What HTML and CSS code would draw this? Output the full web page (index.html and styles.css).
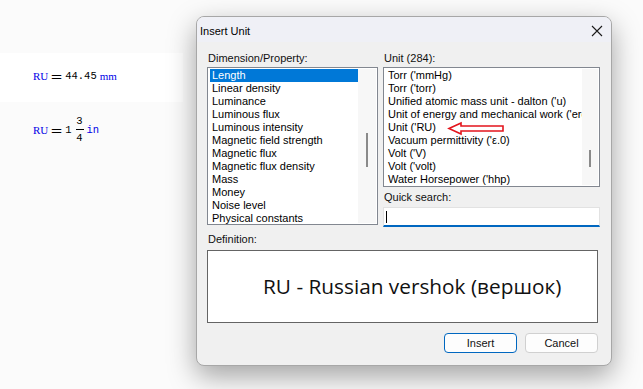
FILE: index.html
```html
<!DOCTYPE html>
<html lang="en">
<head>
<meta charset="UTF-8" />
<title>Insert Unit</title>
<link rel="stylesheet" href="styles.css">
</head>
<body>
  <div class="desk">
    <div class="sheet">
      <div class="region">
        <div class="expr">
          <span class="var">RU</span><span class="eq">=</span><span class="num">44.45</span><span class="unit">mm</span>
        </div>
      </div>
      <div class="expr expr-frac">
        <span class="var">RU</span><span class="eq">=</span><span class="num">1</span>
        <span class="frac"><span>3</span><span class="bar"></span><span>4</span></span>
        <span class="num unit-mono">in</span>
      </div>
    </div>

    <div class="dialog">
      <div class="titlebar">
        <span class="title">Insert Unit</span>
        <svg class="close" width="12" height="12" viewBox="0 0 12 12">
          <path d="M1 1 L11 11 M11 1 L1 11" stroke="#1b1b1b" stroke-width="1.1" fill="none"/>
        </svg>
      </div>

      <div class="body">
        <div class="columns">
          <div class="col">
            <div class="label">Dimension/Property:</div>
            <div class="list list-dim">
              <div class="items">
                <div class="item selected">Length</div>
                <div class="item">Linear density</div>
                <div class="item">Luminance</div>
                <div class="item">Luminous flux</div>
                <div class="item">Luminous intensity</div>
                <div class="item">Magnetic field strength</div>
                <div class="item">Magnetic flux</div>
                <div class="item">Magnetic flux density</div>
                <div class="item">Mass</div>
                <div class="item">Money</div>
                <div class="item">Noise level</div>
                <div class="item">Physical constants</div>
              </div>
              <div class="track"><div class="thumb"></div></div>
            </div>
          </div>

          <div class="col">
            <div class="label">Unit (284):</div>
            <div class="list list-unit">
              <div class="items">
                <div class="item">Torr ('mmHg)</div>
                <div class="item">Torr ('torr)</div>
                <div class="item">Unified atomic mass unit - dalton ('u)</div>
                <div class="item">Unit of energy and mechanical work ('erg)</div>
                <div class="item">Unit ('RU)</div>
                <div class="item">Vacuum permittivity ('ε.0)</div>
                <div class="item">Volt ('V)</div>
                <div class="item">Volt ('volt)</div>
                <div class="item">Water Horsepower ('hhp)</div>
              </div>
              <div class="track"><div class="thumb"></div></div>
              <svg class="arrow" width="60" height="16" viewBox="0 0 60 16">
                <path d="M2 7.5 L14 2 L14 5 L56 5 L56 10 L14 10 L14 13 Z" fill="#fff" stroke="#e3141c" stroke-width="1.6" stroke-linejoin="miter"/>
              </svg>
            </div>
            <div class="label label-search">Quick search:</div>
            <div class="search"><span class="caret"></span></div>
          </div>
        </div>

        <div class="label label-def">Definition:</div>
        <div class="definition">RU - Russian vershok (вершок)</div>

        <div class="buttons">
          <button class="btn btn-default">Insert</button>
          <button class="btn">Cancel</button>
        </div>
      </div>
    </div>
  </div>
</body>
</html>
```

FILE: styles.css
```css
html, body {
  margin: 0;
  width: 643px;
  height: 389px;
  overflow: hidden;
  background: #fbfbfb;
}
.desk {
  display: flex;
  align-items: flex-start;
}

/* worksheet */
.sheet {
  width: 196px;
  padding-top: 53px;
  flex-shrink: 0;
}
.region {
  width: 183px;
  height: 49px;
  background: #fff;
  padding-top: 16px;
  box-sizing: border-box;
}
.expr {
  display: flex;
  align-items: center;
  padding-left: 33px;
  height: 14px;
  font-size: 10.5px;
  color: #000;
}
.var, .unit {
  font-family: "Liberation Serif", serif;
  color: #0000e6;
  font-size: 11px;
}
.eq {
  font-family: "DejaVu Sans", sans-serif;
  font-size: 13px;
  margin: 0 3px 0 3px;
  transform: scaleX(1.15);
}
.num {
  font-family: "Liberation Mono", monospace;
  font-size: 10.5px;
  margin-right: 3px;
}
.unit-mono {
  color: #0000e6;
  margin-left: 3px;
}
.expr-frac {
  margin-top: 13px;
  height: 30px;
}
.frac {
  display: inline-flex;
  flex-direction: column;
  align-items: center;
  font-family: "Liberation Mono", monospace;
  font-size: 10.5px;
  line-height: 11px;
  margin-left: 1px;
}
.frac .bar {
  width: 8px;
  height: 1px;
  background: #000;
  margin: 2px 0 3px;
}

/* dialog */
.dialog {
  margin-top: 16px;
  width: 416px;
  height: 350px;
  box-sizing: border-box;
  border: 1px solid #a7a7a7;
  border-radius: 8px;
  background: #f0f0f0;
  box-shadow: 0 10px 28px rgba(0,0,0,0.36);
  overflow: hidden;
  font-family: "Liberation Sans", Arial, sans-serif;
  font-size: 11px;
  color: #000;
}
.titlebar {
  height: 25px;
  background: #eff0f6;
  display: flex;
  align-items: center;
  justify-content: space-between;
  padding: 0 8px 0 3px;
}
.title {
  font-size: 11px;
  padding-top: 2px;
}
.close {
  margin-top: 2px;
}
.body {
  padding: 9px 11px 0 10px;
}
.columns {
  display: grid;
  grid-template-columns: 171px 217px;
  gap: 5px;
  align-items: start;
}
.label {
  line-height: 14px;
  height: 14px;
  padding-left: 1px;
  margin-bottom: 2px;
  color: #111;
}
.list {
  position: relative;
  display: flex;
  background: #fff;
  border: 1px solid #828790;
  box-sizing: border-box;
  overflow: hidden;
}
.list-dim { height: 158px; }
.list-unit { height: 120px; }
.items {
  flex: 1;
  padding: 1px 0 0 2px;
  overflow: hidden;
}
.item {
  height: 13px;
  line-height: 13px;
  padding-left: 2px;
  white-space: nowrap;
  overflow: hidden;
}
.item.selected {
  background: #0078d7;
  color: #fff;
}
.track {
  width: 18px;
  background: #f7f7f7;
  margin: 1px 1px 1px 0;
  position: relative;
}
.list-unit .track {
  width: 16px;
}
.thumb {
  position: absolute;
  left: 8px;
  top: 64px;
  width: 2px;
  height: 34px;
  background: #8a8a8a;
}
.list-unit .thumb {
  left: 7px;
  top: 81px;
  height: 17px;
}
.arrow {
  position: absolute;
  left: 63px;
  top: 53px;
}
.label-search {
  margin-top: 3px;
  margin-bottom: 3px;
}
.search {
  height: 20px;
  box-sizing: border-box;
  background: #fff;
  border: 1px solid #e2e2e2;
  border-bottom: 2px solid #0067c0;
  display: flex;
  align-items: center;
  padding-left: 2px;
}
.caret {
  width: 1px;
  height: 12px;
  background: #000;
}
.label-def {
  margin-top: 5px;
  margin-bottom: 4px;
}
.definition {
  width: 391px;
  height: 73px;
  box-sizing: border-box;
  background: #fff;
  border: 1px solid #646464;
  font-family: "Open Sans", "Noto Sans", sans-serif;
  font-size: 20.8px;
  line-height: 28px;
  padding: 21px 0 0 55px;
  color: #111;
  white-space: nowrap;
}
.buttons {
  display: flex;
  justify-content: flex-end;
  gap: 8px;
  margin-top: 10px;
  padding-right: 2px;
}
.btn {
  width: 73px;
  height: 20px;
  padding: 0;
  font-family: "Liberation Sans", Arial, sans-serif;
  font-size: 11px;
  background: #fdfdfd;
  color: #111;
  border: 1px solid #d0d0d0;
  border-radius: 4px;
}
.btn-default {
  border-color: #0067c0;
  background: #fdfdfd;
}
```
